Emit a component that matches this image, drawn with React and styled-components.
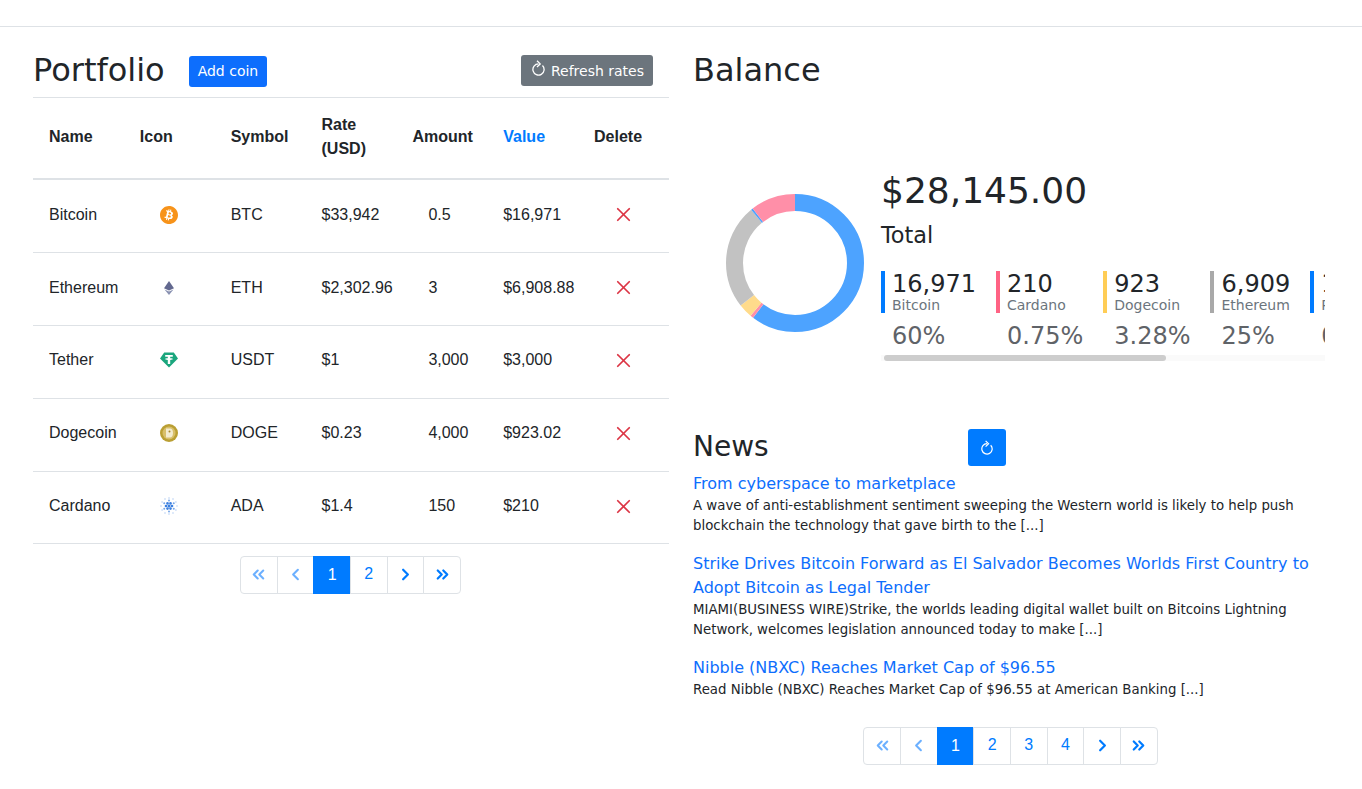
import React from "react";
import styled, { createGlobalStyle } from "styled-components";
import { SiBitcoin } from "react-icons/si";
import { X, ChevronLeft, ChevronRight, ChevronsLeft, ChevronsRight } from "lucide-react";

const GlobalStyle = createGlobalStyle`
  body {
    margin: 0;
    background: #fff;
    color: #212529;
    font-family: "DejaVu Sans", sans-serif;
  }
`;

const TopBar = styled.div`
  height: 26px;
  border-bottom: 1px solid #dee2e6;
`;

const Main = styled.div`
  display: flex;
  gap: 24px;
  padding: 22px 0 24px 33px;
`;

const Column = styled.div`
  width: 636px;
  flex-shrink: 0;
  display: flex;
  flex-direction: column;
`;

const TitleRow = styled.div`
  height: 48px;
  display: flex;
  align-items: flex-start;
  border-bottom: 1px solid #dee2e6;
  padding-right: 16px;
`;

const Title = styled.h2`
  margin: 2px 0 0;
  font-size: 32px;
  font-weight: 400;
  line-height: 38px;
`;

const Button = styled.button`
  border: none;
  border-radius: 3px;
  color: #fff;
  font-family: "DejaVu Sans", sans-serif;
  font-size: 14px;
  height: 31px;
  padding: 0 9px;
  display: flex;
  align-items: center;
  background: ${(p) => p.bg};
`;

const AddButton = styled(Button)`
  margin-left: 24px;
  margin-top: 7px;
  padding-bottom: 2px;
`;

const RefreshButton = styled(Button)`
  margin-left: auto;
  margin-top: 6px;
  gap: 6px;
  svg {
    margin: -5px 0 0 2px;
  }
`;

const Table = styled.table`
  width: 636px;
  table-layout: fixed;
  border-collapse: collapse;
  font-family: "Liberation Sans", sans-serif;
  font-size: 16px;
  line-height: 24px;
`;

const Th = styled.th`
  text-align: left;
  padding: 0 16px 2px;
  height: 78px;
  font-weight: 700;
  border-bottom: 2px solid #dee2e6;
  color: ${(p) => (p.$active ? "#007bff" : "#212529")};
`;

const Td = styled.td`
  padding: 0 16px 2.5px;
  height: 69.39px;
  border-bottom: 1px solid #dee2e6;
  padding-left: ${(p) => p.$indent || "16px"};
  text-align: ${(p) => (p.$center ? "center" : "left")};
  svg {
    display: block;
    margin: 0 auto;
  }
`;

const PagerWrap = styled.div`
  display: flex;
  justify-content: center;
  margin-top: 12px;
  padding-right: 1px;
`;

const PageItem = styled.div`
  width: 37.65px;
  height: 38px;
  box-sizing: border-box;
  margin-left: -1px;
  padding-bottom: ${(p) => (p.$active ? "0" : "2px")};
  display: flex;
  align-items: center;
  justify-content: center;
  border: 1px solid #dee2e6;
  font-family: "Liberation Sans", sans-serif;
  font-size: 16px;
  background: ${(p) => (p.$active ? "#007bff" : "#fff")};
  color: ${(p) => (p.$active ? "#fff" : p.$muted ? "#6cb0ff" : "#007bff")};
  border-color: ${(p) => (p.$active ? "#007bff" : "#dee2e6")};
  &:first-child {
    margin-left: 0;
    border-radius: 4px 0 0 4px;
  }
  &:last-child {
    border-radius: 0 4px 4px 0;
  }
`;

const Summary = styled.div`
  display: flex;
  align-items: center;
  margin-top: 75px;
`;

const DonutBox = styled.div`
  width: 155px;
  margin: 1px 0 0 33px;
  flex-shrink: 0;
  svg {
    display: block;
  }
`;

const Stats = styled.div`
  width: 444px;
  min-width: 0;
`;

const Total = styled.div`
  font-size: 36px;
  line-height: 54px;
`;

const TotalLabel = styled.div`
  font-size: 22.4px;
  line-height: 34px;
`;

const Scroller = styled.div`
  margin-top: 19px;
  overflow: hidden;
  display: flex;
  gap: 20px;
`;

const Legend = styled.div`
  flex-shrink: 0;
`;

const LegendHead = styled.div`
  border-left: 4px solid ${(p) => p.color};
  padding-left: 7px;
  height: 42px;
`;

const LegendValue = styled.div`
  font-size: 24px;
  line-height: 26px;
`;

const LegendName = styled.div`
  font-size: 14px;
  line-height: 16px;
  color: #6c757d;
`;

const LegendPercent = styled.div`
  font-size: 24px;
  line-height: 36px;
  padding-left: 11px;
  margin-top: 5px;
  color: #5f6368;
`;

const ScrollTrack = styled.div`
  height: 6px;
  margin-top: 1px;
  padding-left: 3px;
  background: #fafafa;
`;

const ScrollThumb = styled.div`
  width: 282px;
  height: 6px;
  border-radius: 3px;
  background: #cdcdcd;
`;

const NewsHead = styled.div`
  display: flex;
  align-items: center;
  margin-top: 68px;
  margin-bottom: 6px;
`;

const NewsTitle = styled.h3`
  margin: 0;
  padding-bottom: 1px;
  font-size: 28px;
  font-weight: 400;
  line-height: 34px;
`;

const IconButton = styled(Button)`
  width: 38px;
  height: 37px;
  margin-left: 199px;
  padding: 0;
  justify-content: center;
`;

const NewsList = styled.div`
  display: flex;
  flex-direction: column;
  gap: 16px;
  margin-bottom: 15px;
`;

const NewsLink = styled.a`
  display: block;
  font-size: 16px;
  line-height: 24px;
  color: #0d6efd;
`;

const NewsText = styled.p`
  margin: 0;
  font-size: 13.33px;
  line-height: 20px;
`;

const RefreshIcon = ({ width, height }) => (
  <svg width={width} height={height} viewBox="0 0 13 16" fill="none" stroke="#fff" strokeWidth="1.3">
    <path d="M10.46 5.54A5.6 5.6 0 1 1 6.5 3.9" />
    <path d="M5 .8L8.200 3.900 5 7" />
  </svg>
);

const EthIcon = () => (
  <svg width="18" height="18" viewBox="0 0 18 18">
    <path d="M9 2L14 9.200 9 11.500 4 9.200z" fill="#62688f" />
    <path d="M4.500 10.400L9 12.500 13.500 10.400 9 16z" fill="#8a92b2" />
  </svg>
);

const UsdtIcon = () => (
  <svg width="18" height="18" viewBox="0 0 18 18">
    <path d="M4.200 1.500H13.800L18 7.500 9 16.500 0 7.500z" fill="#1aa67d" />
    <path d="M5.200 4h7.600v1.800H10.200v1.500c1.500.1 2.800.4 2.800.8s-1.300.7-2.800.8V13H7.800V8.900c-1.500-.1-2.800-.4-2.800-.8s1.300-.7 2.800-.8V5.800H5.200z" fill="#fff" />
  </svg>
);

const DogeIcon = () => (
  <svg width="18" height="18" viewBox="0 0 18 18">
    <circle cx="9" cy="9" r="9" fill="#ba9f33" />
    <circle cx="9" cy="9" r="6.500" fill="#d8bf6a" />
    <path d="M6 4.500h4c2 0 3 2 3 4.500s-1 4.500-3 4.500H6z" fill="#f3ecd0" />
    <circle cx="9.500" cy="7.500" r="1" fill="#a8862a" />
  </svg>
);

const adaDots = [];
for (let ring = 0; ring < 3; ring++) {
  const n = [6, 6, 12][ring];
  const r = [3, 5.500, 8][ring];
  const size = [1.300, 1, 0.700][ring];
  const opacity = [1, 0.7, 0.45][ring];
  for (let i = 0; i < n; i++) {
    const a = (Math.PI * 2 * i) / n + (ring === 1 ? Math.PI / 6 : 0);
    adaDots.push({ x: 9 + r * Math.cos(a), y: 9 + r * Math.sin(a), size, opacity });
  }
}

const AdaIcon = () => (
  <svg width="18" height="18" viewBox="0 0 18 18">
    {adaDots.map((d, i) => (
      <circle key={i} cx={d.x} cy={d.y} r={d.size} fill="#3b7fe0" opacity={d.opacity} />
    ))}
    <circle cx="9" cy="9" r="1.500" fill="#3b7fe0" />
  </svg>
);

const coins = [
  ["Bitcoin", <SiBitcoin size={18} color="#f7931a" />, "BTC", "$33,942", "0.5", "$16,971"],
  ["Ethereum", <EthIcon />, "ETH", "$2,302.96", "3", "$6,908.88"],
  ["Tether", <UsdtIcon />, "USDT", "$1", "3,000", "$3,000"],
  ["Dogecoin", <DogeIcon />, "DOGE", "$0.23", "4,000", "$923.02"],
  ["Cardano", <AdaIcon />, "ADA", "$1.4", "150", "$210"],
];

const slices = [
  ["#4da3ff", 60.3],
  ["#ff8fa8", 0.75],
  ["#ffdb8b", 3.28],
  ["#c2c2c2", 24.55],
  ["#4da3ff", 0.47],
  ["#ff8fa8", 10.65],
];

const legends = [
  ["#007bff", "16,971", "Bitcoin", "60%"],
  ["#ff6384", "210", "Cardano", "0.75%"],
  ["#ffcd56", "923", "Dogecoin", "3.28%"],
  ["#a9a9a9", "6,909", "Ethereum", "25%"],
  ["#007bff", "132", "Polkadot", "0.47%"],
  ["#ff6384", "3,000", "Tether", "10.66%"],
];

const news = [
  [
    "From cyberspace to marketplace",
    "A wave of anti-establishment sentiment sweeping the Western world is likely to help push blockchain the technology that gave birth to the [...]",
  ],
  [
    "Strike Drives Bitcoin Forward as El Salvador Becomes Worlds First Country to Adopt Bitcoin as Legal Tender",
    "MIAMI(BUSINESS WIRE)Strike, the worlds leading digital wallet built on Bitcoins Lightning Network, welcomes legislation announced today to make [...]",
  ],
  [
    "Nibble (NBXC) Reaches Market Cap of $96.55",
    "Read Nibble (NBXC) Reaches Market Cap of $96.55 at American Banking [...]",
  ],
];

const Donut = () => {
  const r = 60.5;
  const c = 2 * Math.PI * r;
  let offset = 0;
  return (
    <svg width="138" height="138" viewBox="0 0 138 138">
      <g transform="rotate(-90 69 69)">
        {slices.map(([color, pct]) => {
          const len = (pct / 100) * c;
          const el = (
            <circle
              key={color + pct}
              cx="69"
              cy="69"
              r={r}
              fill="none"
              stroke={color}
              strokeWidth="17"
              strokeDasharray={`${len} ${c - len}`}
              strokeDashoffset={-offset}
            />
          );
          offset += len;
          return el;
        })}
      </g>
    </svg>
  );
};

const Pager = ({ pages }) => (
  <PagerWrap>
    <PageItem $muted>
      <ChevronsLeft size={19} strokeWidth={2.6} />
    </PageItem>
    <PageItem $muted>
      <ChevronLeft size={19} strokeWidth={2.6} />
    </PageItem>
    {pages.map((p, i) => (
      <PageItem key={p} $active={i === 0}>
        {p}
      </PageItem>
    ))}
    <PageItem>
      <ChevronRight size={19} strokeWidth={2.8} />
    </PageItem>
    <PageItem>
      <ChevronsRight size={19} strokeWidth={2.8} />
    </PageItem>
  </PagerWrap>
);

export default function App() {
  return (
    <>
      <GlobalStyle />
      <TopBar />
      <Main>
        <Column>
          <TitleRow>
            <Title>Portfolio</Title>
            <AddButton bg="#0d6efd">Add coin</AddButton>
            <RefreshButton bg="#6c757d">
              <RefreshIcon width={13} height={16} />
              Refresh rates
            </RefreshButton>
          </TitleRow>
          <Table>
            <thead>
              <tr>
                <Th>Name</Th>
                <Th>Icon</Th>
                <Th>Symbol</Th>
                <Th>Rate (USD)</Th>
                <Th>Amount</Th>
                <Th $active>Value</Th>
                <Th>Delete</Th>
              </tr>
            </thead>
            <tbody>
              {coins.map(([name, icon, symbol, rate, amount, value]) => (
                <tr key={name}>
                  <Td>{name}</Td>
                  <Td $center>{icon}</Td>
                  <Td>{symbol}</Td>
                  <Td>{rate}</Td>
                  <Td $indent="32px">{amount}</Td>
                  <Td>{value}</Td>
                  <Td $center>
                    <X size={23} color="#dc3545" strokeWidth={1.8} />
                  </Td>
                </tr>
              ))}
            </tbody>
          </Table>
          <Pager pages={[1, 2]} />
        </Column>
        <Column>
          <Title>Balance</Title>
          <Summary>
            <DonutBox>
              <Donut />
            </DonutBox>
            <Stats>
              <Total>$28,145.00</Total>
              <TotalLabel>Total</TotalLabel>
              <Scroller>
                {legends.map(([color, value, name, percent]) => (
                  <Legend key={name}>
                    <LegendHead color={color}>
                      <LegendValue>{value}</LegendValue>
                      <LegendName>{name}</LegendName>
                    </LegendHead>
                    <LegendPercent>{percent}</LegendPercent>
                  </Legend>
                ))}
              </Scroller>
              <ScrollTrack>
                <ScrollThumb />
              </ScrollTrack>
            </Stats>
          </Summary>
          <NewsHead>
            <NewsTitle>News</NewsTitle>
            <IconButton bg="#007bff">
              <RefreshIcon width={12} height={15} />
            </IconButton>
          </NewsHead>
          <NewsList>
            {news.map(([title, text]) => (
              <div key={title}>
                <NewsLink>{title}</NewsLink>
                <NewsText>{text}</NewsText>
              </div>
            ))}
          </NewsList>
          <Pager pages={[1, 2, 3, 4]} />
        </Column>
      </Main>
    </>
  );
}
